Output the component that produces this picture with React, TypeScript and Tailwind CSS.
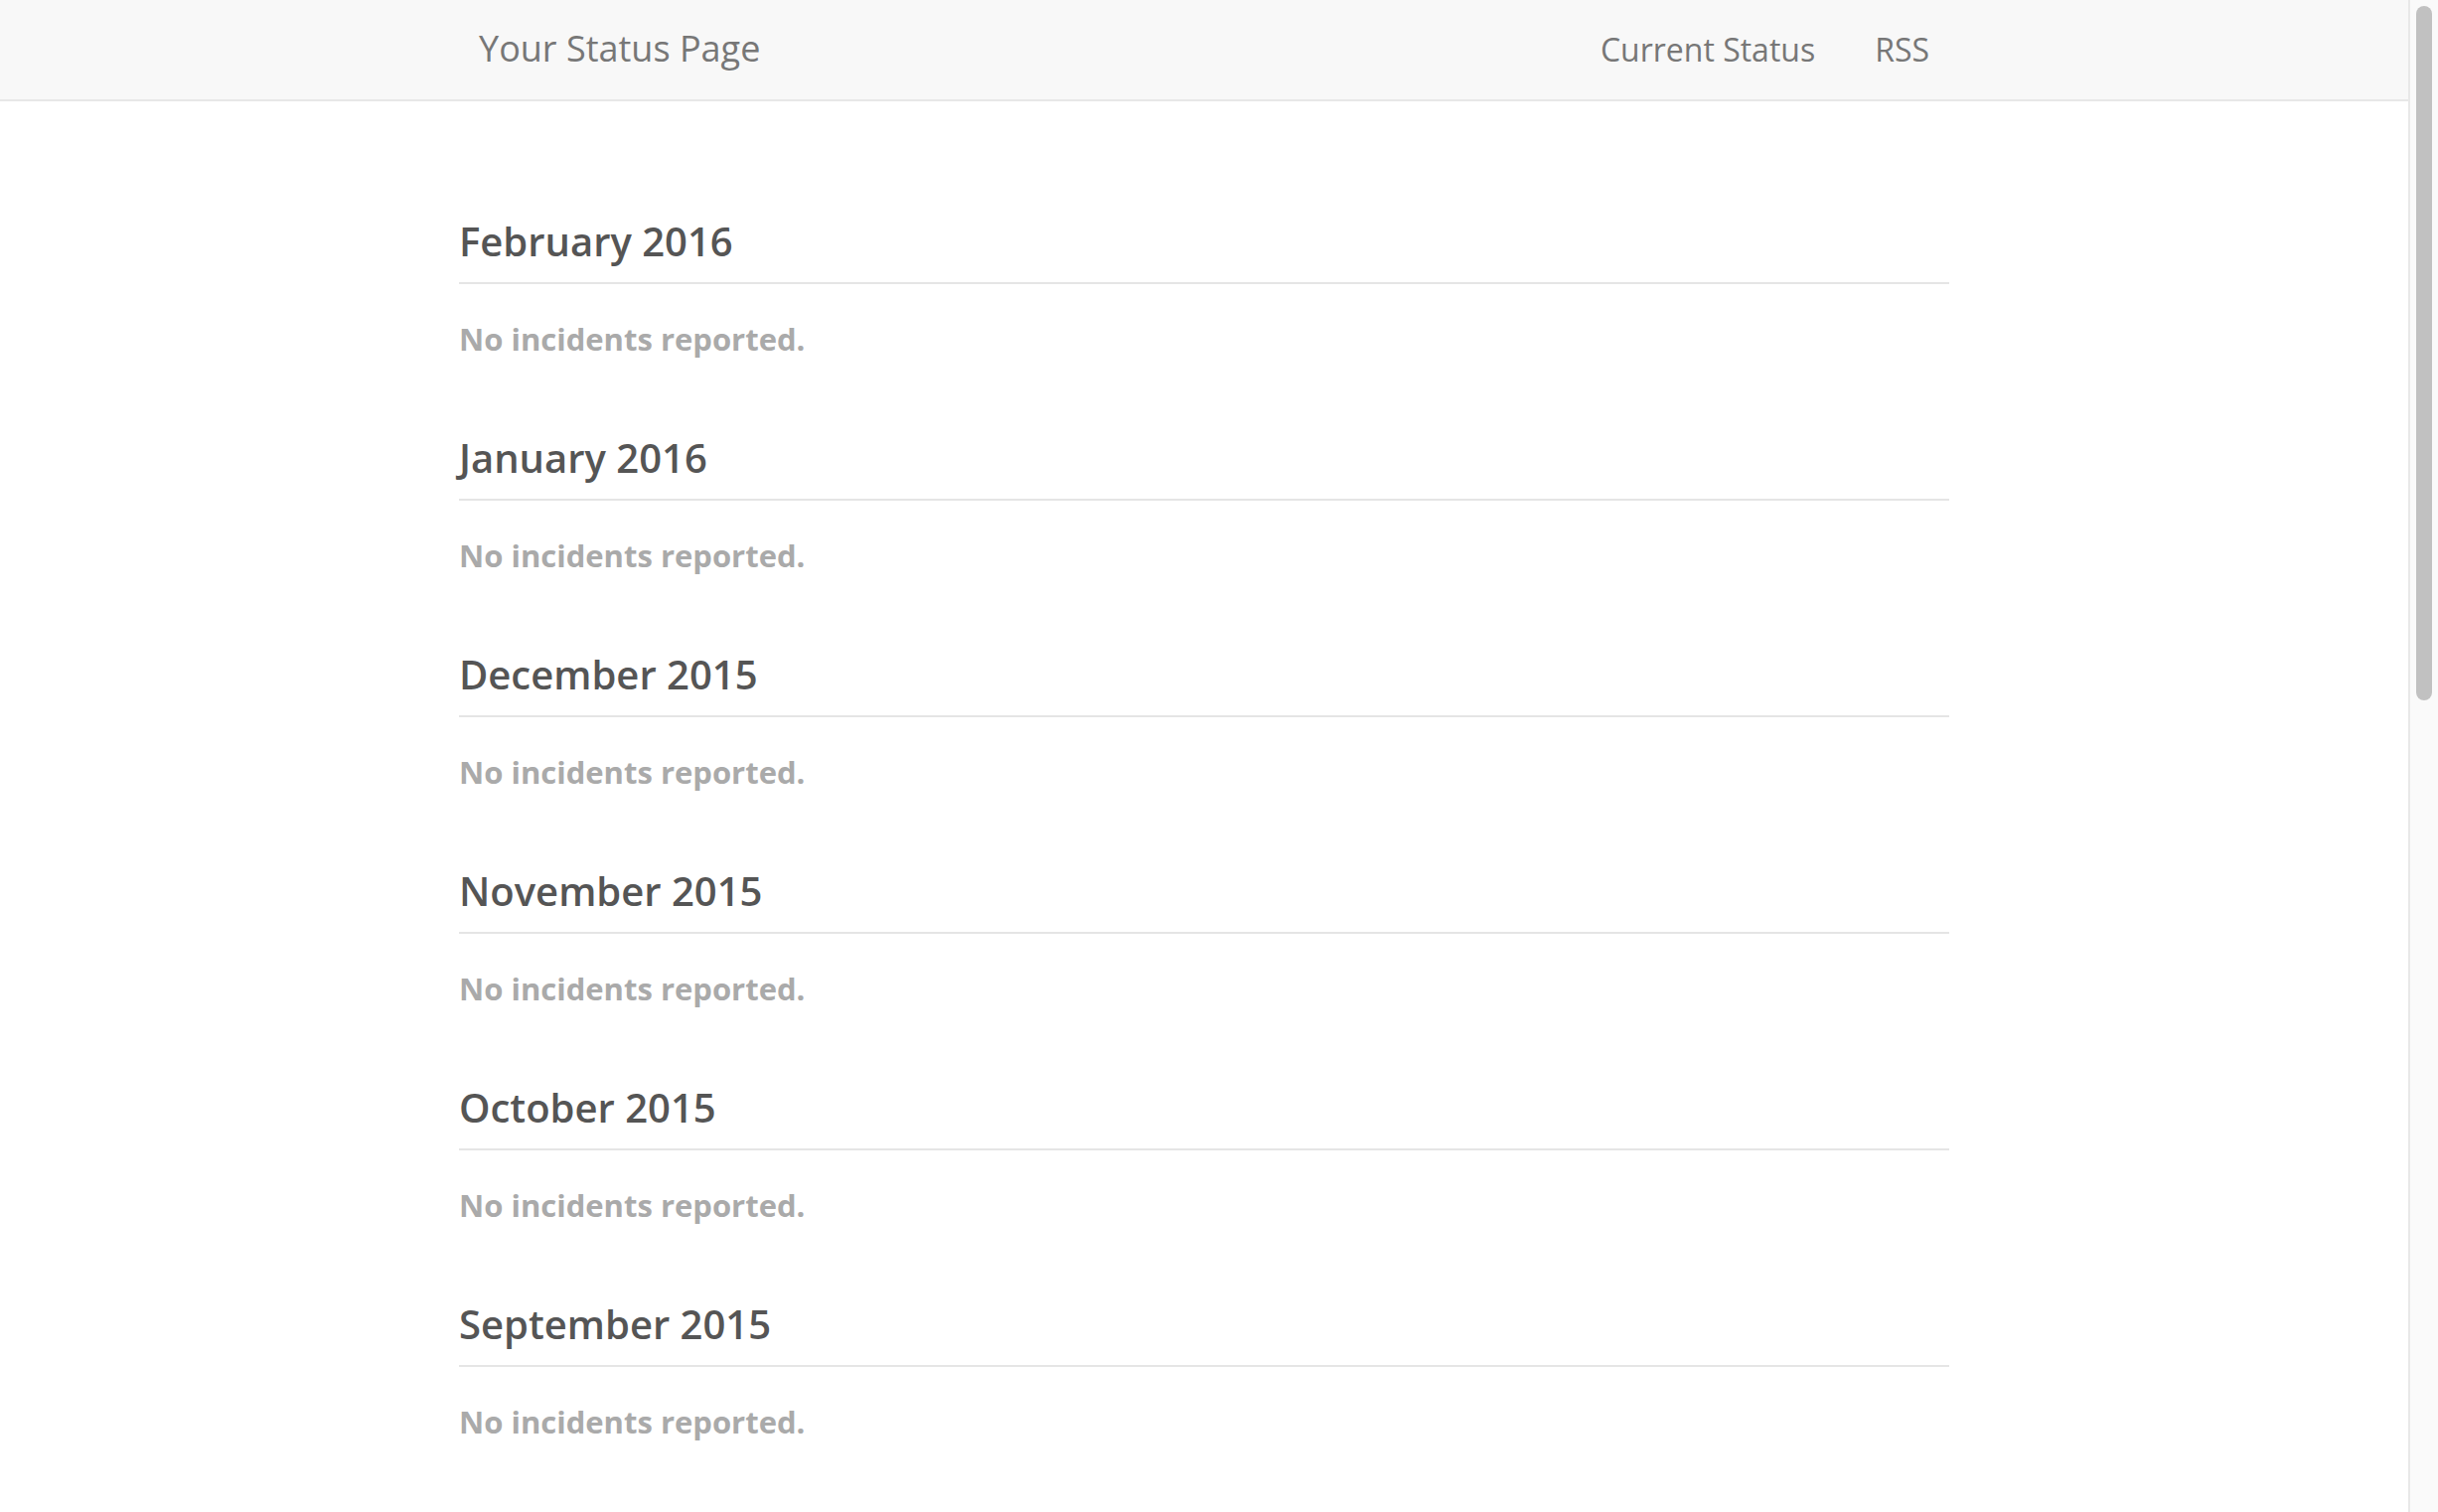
import React from 'react';

const months = [
  'February 2016',
  'January 2016',
  'December 2015',
  'November 2015',
  'October 2015',
  'September 2015',
];

const navLinks = ['Current Status', 'RSS'];

function Navbar () {
  return (
    <nav className="h-[102px] border-b-2 border-[#e7e7e7] bg-[#f8f8f8]">
      <div className="mx-auto flex w-[1500px] items-baseline justify-between px-5 pt-[31px]">
        <a className="text-[36px] leading-none text-[#777]">Your Status Page</a>
        <ul className="flex items-baseline gap-[60px]">
          {navLinks.map((link) => (
            <li key={link}>
              <a className="text-[32px] leading-none text-[#777]">{link}</a>
            </li>
          ))}
        </ul>
      </div>
    </nav>
  );
}

function MonthSection ({ month }: { month: string }) {
  return (
    <section>
      <h2 className="border-b-2 border-[#e5e5e5] pb-[19px] text-[40px] leading-[44px] font-semibold text-[#555]">
        {month}
      </h2>
      <p className="mt-[34px] text-[31px] leading-[42px] font-bold text-[#aaa]">
        No incidents reported.
      </p>
    </section>
  );
}

export default function App () {
  return (
    <div className="flex h-screen overflow-hidden bg-white font-['Open_Sans',sans-serif]">
      <div className="flex-1 overflow-hidden">
        <Navbar />
        <main className="mx-auto flex w-[1500px] flex-col gap-[77px] pt-[119px]">
          {months.map((month) => (
            <MonthSection key={month} month={month} />
          ))}
        </main>
      </div>

      {/* page scrollbar */}
      <div className="w-[30px] shrink-0 border-l-2 border-[#e8e8e8] bg-[#fafafa] px-[6px] pt-[6px]">
        <div className="h-[699px] rounded-full bg-[#c1c1c1]" />
      </div>
    </div>
  );
}
